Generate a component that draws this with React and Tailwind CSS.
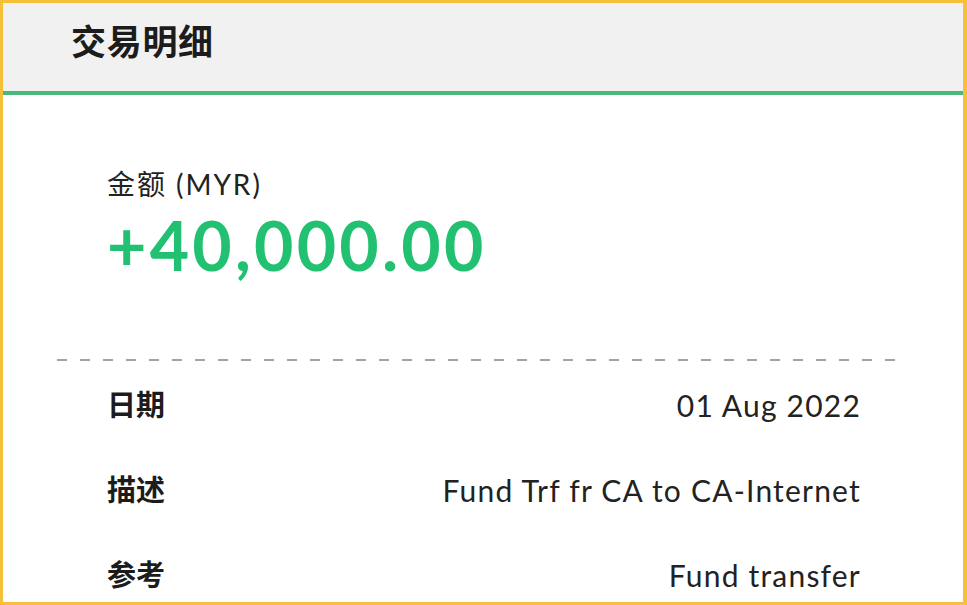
export default function App() {
  const rows = [
    ["日期", "01 Aug 2022"],
    ["描述", "Fund Trf fr CA to CA-Internet"],
    ["参考", "Fund transfer"],
  ];
  return (
    <div
      className="w-[967px] h-[605px] overflow-hidden bg-white border-t-[3px] border-l-[3px] border-r-[4px] border-b-[3px] border-[#f6c03a] flex flex-col"
      style={{ fontFamily: 'Lato, "Noto Sans CJK SC", sans-serif' }}
    >
      <div className="h-[92px] shrink-0 bg-[#f1f1f1] border-b-[4px] border-[#48b97a] flex items-center pl-[68px] pb-[11px]">
        <h1 className="text-[35px] font-bold text-[#1c1c1c] leading-none tracking-[0.02em]">交易明细</h1>
      </div>
      <div className="flex flex-col">
        <div className="pl-[104px] pt-[73px]">
          <div className="text-[28px] text-[#222] leading-[32px] tracking-[0.07em]">金额 (MYR)</div>
          <div className="text-[68px] font-bold text-[#22c172] leading-[80px] mt-[5px] tracking-[0.047em]">+40,000.00</div>
        </div>
        <div className="ml-[54px] mr-[65px] mt-[74px] h-[2px] bg-[repeating-linear-gradient(to_right,#a3a3a3_0,#a3a3a3_10px,transparent_10px,transparent_23px)]" />
        <div className="flex flex-col pl-[104px] pr-[103px] pt-[24px] gap-[45px]">
          {rows.map(([k, v]) => (
            <div key={k} className="flex items-center justify-between h-[40px]">
              <span className="text-[29px] font-bold text-[#1c1c1c]">{k}</span>
              <span className="text-[30px] text-[#222] tracking-[0.04em] -mr-[1px]">{v}</span>
            </div>
          ))}
        </div>
      </div>
    </div>
  );
}
